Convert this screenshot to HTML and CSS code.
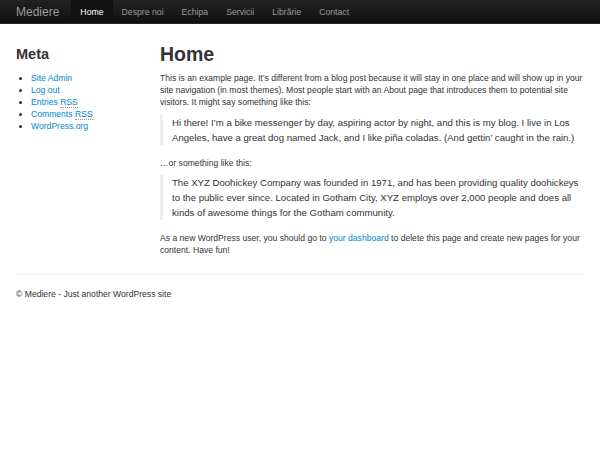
FILE: index.html
```
<!DOCTYPE html>
<html>
<head>
<meta charset="utf-8">
<link rel="stylesheet" href="styles.css">
</head>
<body>
<div class="navbar">
  <a class="brand" href="#">Mediere</a>
  <ul class="nav">
    <li class="active"><a href="#">Home</a></li>
    <li><a href="#">Despre noi</a></li>
    <li><a href="#">Echipa</a></li>
    <li><a href="#">Servicii</a></li>
    <li><a href="#">Librărie</a></li>
    <li><a href="#">Contact</a></li>
  </ul>
</div>
<div class="container">
  <div class="row">
    <aside class="sidebar">
      <h3>Meta</h3>
      <ul class="meta">
        <li><a href="#">Site Admin</a></li>
        <li><a href="#">Log out</a></li>
        <li><a href="#">Entries <abbr>RSS</abbr></a></li>
        <li><a href="#">Comments <abbr>RSS</abbr></a></li>
        <li><a href="#">WordPress.org</a></li>
      </ul>
    </aside>
    <main class="content">
      <h1>Home</h1>
      <p class="intro">This is an example page. It’s different from a blog post because it will stay in one place and will show up in your site navigation (in most themes). Most people start with an About page that introduces them to potential site visitors. It might say something like this:</p>
      <blockquote><p>Hi there! I’m a bike messenger by day, aspiring actor by night, and this is my blog. I live in Los Angeles, have a great dog named Jack, and I like piña coladas. (And gettin’ caught in the rain.)</p></blockquote>
      <p>…or something like this:</p>
      <blockquote><p>The XYZ Doohickey Company was founded in 1971, and has been providing quality doohickeys to the public ever since. Located in Gotham City, XYZ employs over 2,000 people and does all kinds of awesome things for the Gotham community.</p></blockquote>
      <p>As a new WordPress user, you should go to <a href="#">your dashboard</a> to delete this page and create new pages for your content. Have fun!</p>
    </main>
  </div>
  <hr>
  <footer class="footer"><p>© Mediere - Just another WordPress site</p></footer>
</div>
</body>
</html>
```
FILE: styles.css
```
* { box-sizing: border-box; }
html, body { margin: 0; padding: 0; }
body {
  font-family: "Liberation Sans", Arial, sans-serif;
  font-size: 8.6px;
  line-height: 12px;
  color: #333;
  background: #fff;
}
a { color: #0088cc; text-decoration: none; }
.navbar {
  height: 24px;
  display: flex;
  align-items: stretch;
  padding: 0 16px;
  background: linear-gradient(to bottom, #222222, #111111);
  border-bottom: 1px solid #252525;
}
.brand {
  color: #999;
  font-size: 12px;
  line-height: 24px;
  padding-right: 12px;
}
.nav {
  display: flex;
  list-style: none;
  margin: 0;
  padding: 0;
  font-size: 8.7px;
}
.nav li a {
  display: block;
  height: 23px;
  line-height: 24px;
  padding: 0 9px;
  color: #999;
}
.nav li.active a {
  color: #fff;
  background: #111;
}
.container { padding: 12px 16px 0; }
.row {
  display: grid;
  grid-template-columns: 133px 1fr;
  column-gap: 11px;
}
h1, h3 { font-weight: bold; color: #333; margin: 6px 0; }
h1 { font-size: 19.5px; line-height: 24px; }
h3 { font-size: 14.5px; line-height: 24px; }
p { margin: 0 0 6px; }
p.intro { margin-bottom: 7px; }
.meta { margin: 0 0 6px 15px; padding: 0; }
abbr { border-bottom: 1px dotted #999; text-decoration: none; }
blockquote {
  margin: 0 0 12px;
  padding: 0 0 0 9px;
  border-left: 3px solid #eee;
}
blockquote p {
  margin: 0;
  font-size: 9.6px;
  line-height: 15px;
}
hr {
  margin: 12px 0;
  border: 0;
  border-top: 1px solid #eee;
  border-bottom: 1px solid #fff;
}
.footer p { margin: 12px 0 0; }
```
